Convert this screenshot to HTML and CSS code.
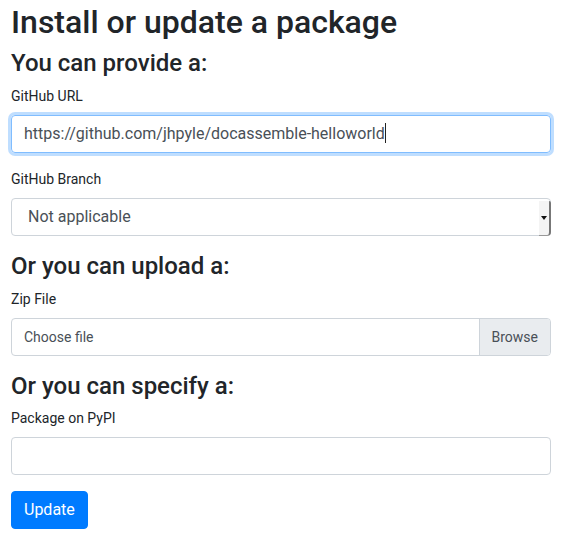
FILE: index.html
```html
<!DOCTYPE html>
<html>
<head>
<meta charset="utf-8">
<link rel="stylesheet" href="styles.css">
</head>
<body>
<div class="page">
  <h1 class="title">Install or update a package</h1>
  <h2 class="section">You can provide a:</h2>
  <div class="group">
    <label class="label">GitHub URL</label>
    <div class="control focused">https://github.com/jhpyle/docassemble-helloworld<span class="caret"></span></div>
  </div>
  <div class="group">
    <label class="label">GitHub Branch</label>
    <div class="select">
      <span class="select-text">Not applicable</span>
      <span class="select-btn"><span class="arrow"></span></span>
    </div>
  </div>
  <h2 class="section">Or you can upload a:</h2>
  <div class="group">
    <label class="label">Zip File</label>
    <div class="file">
      <span class="file-text">Choose file</span>
      <span class="file-btn">Browse</span>
    </div>
  </div>
  <h2 class="section">Or you can specify a:</h2>
  <div class="group">
    <label class="label">Package on PyPI</label>
    <div class="control"></div>
  </div>
  <button class="btn">Update</button>
</div>
</body>
</html>
```

FILE: styles.css
```css
html, body {
  margin: 0;
  padding: 0;
  background: #fff;
}
body {
  font-family: Roboto, "Liberation Sans", sans-serif;
  color: #212529;
  font-size: 16px;
  line-height: 1.5;
}
.page {
  padding: 3px 12px 0 11px;
}
.title {
  font-size: 32px;
  font-weight: 500;
  line-height: 38px;
  margin: 0 0 8px 0;
}
.section {
  font-size: 24px;
  font-weight: 500;
  line-height: 28.8px;
  margin: 0 0 8px 0;
}
.group {
  margin-bottom: 16px;
}
.label {
  display: block;
  font-size: 14px;
  line-height: 21px;
  margin-bottom: 8px;
}
.control {
  box-sizing: border-box;
  height: 38px;
  border: 1px solid #ced4da;
  border-radius: 4px;
  padding: 6px 12px;
  color: #495057;
  font-size: 16px;
  line-height: 24px;
  white-space: nowrap;
}
.control.focused {
  border-color: #80bdff;
  box-shadow: 0 0 0 3px rgba(0, 123, 255, .25);
}
.caret {
  display: inline-block;
  width: 1px;
  height: 20px;
  background: #222;
  vertical-align: -4px;
}
.select {
  position: relative;
  box-sizing: border-box;
  height: 38px;
  border: 1px solid #ced4da;
  border-radius: 4px;
  padding: 6px 16px;
  color: #495057;
  font-size: 16px;
  line-height: 24px;
}
.select-text {
  display: block;
}
.select-btn {
  position: absolute;
  right: -1px;
  top: 2px;
  bottom: -1px;
  width: 12px;
  background: #f4f4f4;
  border-right: 2px solid #777;
  border-bottom: 1px solid #999;
  box-sizing: border-box;
  border-radius: 0 2px 4px 0;
  display: flex;
  align-items: center;
  justify-content: center;
}
.arrow {
  width: 0;
  height: 0;
  border-left: 3px solid transparent;
  border-right: 3px solid transparent;
  border-top: 4px solid #111;
  margin-left: -1px;
}
.file {
  box-sizing: border-box;
  height: 38px;
  border: 1px solid #ced4da;
  border-radius: 4px;
  display: flex;
  color: #495057;
  font-size: 14px;
  line-height: 24px;
  overflow: hidden;
}
.file-text {
  flex: 1;
  padding: 6px 12px;
}
.file-btn {
  background: #e9ecef;
  border-left: 1px solid #ced4da;
  padding: 6px 12px;
}
.btn {
  display: block;
  box-sizing: border-box;
  height: 38px;
  background: #007bff;
  border: 1px solid #007bff;
  border-radius: 4px;
  color: #fff;
  font-family: Roboto, "Liberation Sans", sans-serif;
  font-size: 16px;
  line-height: 24px;
  padding: 6px 12px;
  margin-top: 0;
}
```
